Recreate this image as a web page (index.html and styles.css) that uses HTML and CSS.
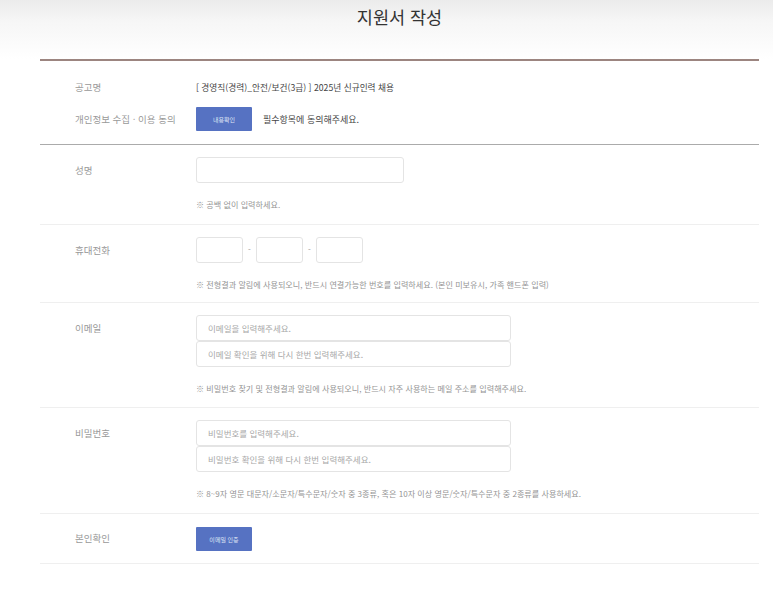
FILE: index.html
```html
<!DOCTYPE html>
<html lang="ko">
<head>
<meta charset="utf-8">
<link rel="stylesheet" href="styles.css">
</head>
<body>
<header class="top">
  <h1 class="title">지원서 작성</h1>
</header>
<main class="wrap">
  <section class="info">
    <div class="info-row">
      <div class="info-label">공고명</div>
      <div class="info-value">[ 경영직(경력)_안전/보건(3급) ] 2025년 신규인력 채용</div>
    </div>
    <div class="info-row">
      <div class="info-label">개인정보 수집 · 이용 동의</div>
      <div class="info-value">
        <button class="btn">내용확인</button>
        <span class="agree">필수항목에 동의해주세요.</span>
      </div>
    </div>
  </section>
  <section class="form">
    <div class="row">
      <div class="label">성명</div>
      <div class="field">
        <div class="input w-name"></div>
        <p class="help">※ 공백 없이 입력하세요.</p>
      </div>
    </div>
    <div class="row row-phone">
      <div class="label">휴대전화</div>
      <div class="field">
        <div class="phone">
          <div class="input w-phone"></div><span class="dash">-</span>
          <div class="input w-phone"></div><span class="dash">-</span>
          <div class="input w-phone"></div>
        </div>
        <p class="help">※ 전형결과 알림에 사용되오니, 반드시 연결가능한 번호를 입력하세요. (본인 미보유시, 가족 핸드폰 입력)</p>
      </div>
    </div>
    <div class="row row-email">
      <div class="label">이메일</div>
      <div class="field">
        <div class="input w-wide ph">이메일을 입력해주세요.</div>
        <div class="input w-wide ph">이메일 확인을 위해 다시 한번 입력해주세요.</div>
        <p class="help">※ 비밀번호 찾기 및 전형결과 알림에 사용되오니, 반드시 자주 사용하는 메일 주소를 입력해주세요.</p>
      </div>
    </div>
    <div class="row">
      <div class="label">비밀번호</div>
      <div class="field">
        <div class="input w-wide ph">비밀번호를 입력해주세요.</div>
        <div class="input w-wide ph">비밀번호 확인을 위해 다시 한번 입력해주세요.</div>
        <p class="help">※ 8~9자 영문 대문자/소문자/특수문자/숫자 중 3종류, 혹은 10자 이상 영문/숫자/특수문자 중 2종류를 사용하세요.</p>
      </div>
    </div>
    <div class="row last">
      <div class="label">본인확인</div>
      <div class="field">
        <button class="btn">이메일 인증</button>
      </div>
    </div>
  </section>
</main>
</body>
</html>
```
FILE: styles.css
```css
* { box-sizing: border-box; }
html, body { margin: 0; padding: 0; background: #fff; }
body {
  font-family: "Noto Sans CJK KR", "Noto Sans", sans-serif;
  color: #555;
  width: 773px;
}
.top {
  height: 59px;
  background: linear-gradient(to bottom, #ebebeb 0%, #f6f6f6 35%, #ffffff 100%);
  padding-top: 4px;
}
.title {
  margin: 0;
  padding-left: 26px;
  text-align: center;
  font-size: 17.5px;
  font-weight: 400;
  color: #333;
  line-height: 26px;
}
.wrap {
  margin-left: 40px;
  width: 719px;
  border-top: 2px solid #9c8580;
}
.info {
  padding: 12px 0 11px 35px;
  border-bottom: 1px solid #ababab;
}
.info-row {
  display: flex;
  align-items: center;
  height: 28px;
}
.info-row + .info-row { margin-top: 4px; }
.info-label {
  width: 121px;
  font-size: 9.5px;
  color: #999;
}
.info-value {
  display: flex;
  align-items: center;
  font-size: 8.7px;
  color: #444;
}
.btn {
  width: 56px;
  height: 24px;
  border: 0;
  border-radius: 1px;
  background: #5672c2;
  color: #dfe5f5;
  font-family: inherit;
  font-size: 6px;
  padding: 0;
}
.agree {
  margin-left: 11px;
  font-size: 9px;
  color: #444;
}
.row {
  display: flex;
  padding: 12px 0 13px 35px;
  border-bottom: 1px solid #efefef;
}
.row-phone { padding-bottom: 11px; }
.row-email { padding-bottom: 12px; }
.row.last { padding-top: 13px; padding-bottom: 12px; }
.label {
  width: 121px;
  height: 26px;
  line-height: 26px;
  font-size: 9.5px;
  color: #999;
}
.row.last .label { height: 23px; line-height: 23px; }
.field { display: flex; flex-direction: column; align-items: flex-start; }
.input {
  height: 26px;
  border: 1px solid #e4e4e4;
  border-radius: 3px;
  background: #fff;
  overflow: hidden;
}
.w-name { width: 208px; }
.w-phone { width: 47px; }
.w-wide { width: 315px; }
.ph {
  font-size: 8.5px;
  color: #a8a8a8;
  line-height: 24px;
  padding-left: 11px;
  white-space: nowrap;
}
.phone { display: flex; align-items: center; height: 26px; }
.dash {
  width: 13px;
  text-align: center;
  font-size: 8px;
  line-height: 10px;
  color: #999;
}
.help {
  margin: 16px 0 0;
  height: 12px;
  line-height: 12px;
  font-size: 8.1px;
  color: #949494;
  white-space: nowrap;
}
```
